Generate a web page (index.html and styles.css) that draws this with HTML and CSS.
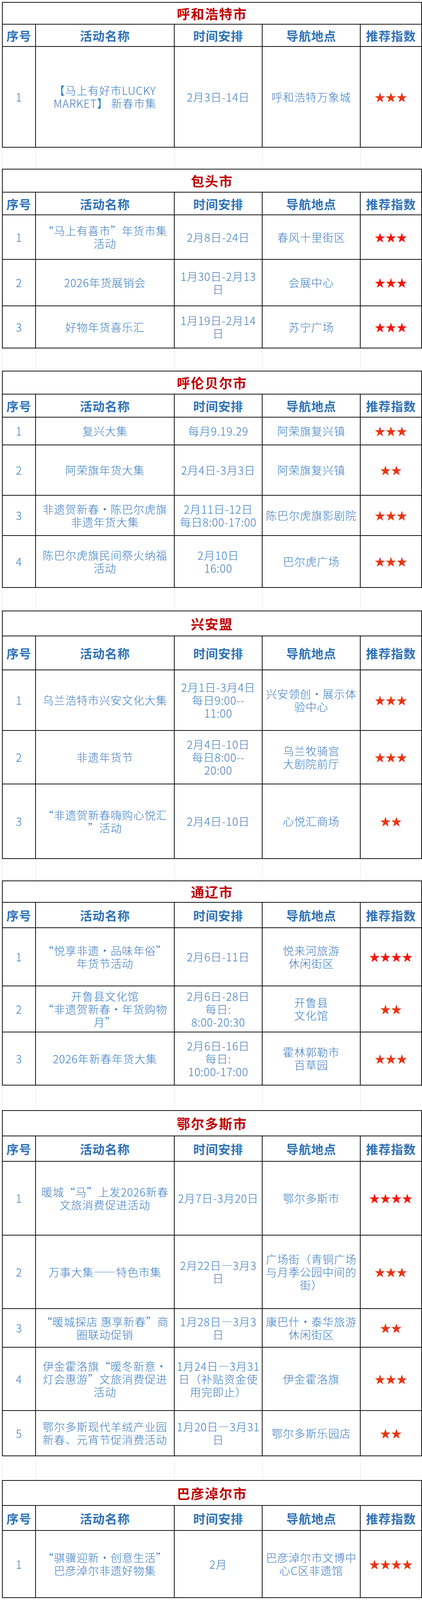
FILE: index.html
```html
<!DOCTYPE html>
<html lang="zh-CN">
<head>
<meta charset="utf-8">
<meta name="viewport" content="width=1080, initial-scale=1">
<title>内蒙古年货市集活动</title>
<link rel="stylesheet" href="styles.css">
</head>
<body>
<main class="sheet">

<section class="city" role="table">
  <div class="row title h56"><div class="cell">呼和浩特市</div></div>
  <div class="row head h57"><div class="cell">序号</div><div class="cell">活动名称</div><div class="cell">时间安排</div><div class="cell">导航地点</div><div class="cell">推荐指数</div></div>
  <div class="row h258"><div class="cell">1</div><div class="cell">【马上有好市LUCKY<br>MARKET】 新春市集</div><div class="cell">2月3日-14日</div><div class="cell">呼和浩特万象城</div><div class="cell stars">★★★</div></div>
</section>

<div class="gap g54"><i></i><i></i><i></i><i></i><i></i></div>

<section class="city" role="table">
  <div class="row title h59"><div class="cell">包头市</div></div>
  <div class="row head h58"><div class="cell">序号</div><div class="cell">活动名称</div><div class="cell">时间安排</div><div class="cell">导航地点</div><div class="cell">推荐指数</div></div>
  <div class="row h114"><div class="cell">1</div><div class="cell">“马上有喜市”年货市集<br>活动</div><div class="cell">2月8日-24日</div><div class="cell">春风十里街区</div><div class="cell stars red">★★★</div></div>
  <div class="row h119"><div class="cell">2</div><div class="cell">2026年货展销会</div><div class="cell">1月30日-2月13<br>日</div><div class="cell">会展中心</div><div class="cell stars red">★★★</div></div>
  <div class="row h108"><div class="cell">3</div><div class="cell">好物年货喜乐汇</div><div class="cell">1月19日-2月14<br>日</div><div class="cell">苏宁广场</div><div class="cell stars red">★★★</div></div>
</section>

<div class="gap g57"><i></i><i></i><i></i><i></i><i></i></div>

<section class="city" role="table">
  <div class="row title h59"><div class="cell">呼伦贝尔市</div></div>
  <div class="row head h59"><div class="cell">序号</div><div class="cell">活动名称</div><div class="cell">时间安排</div><div class="cell">导航地点</div><div class="cell">推荐指数</div></div>
  <div class="row h71"><div class="cell">1</div><div class="cell">复兴大集</div><div class="cell">每月9.19.29</div><div class="cell">阿荣旗复兴镇</div><div class="cell stars">★★★</div></div>
  <div class="row h129"><div class="cell">2</div><div class="cell">阿荣旗年货大集</div><div class="cell">2月4日-3月3日</div><div class="cell">阿荣旗复兴镇</div><div class="cell stars">★★</div></div>
  <div class="row h103"><div class="cell">3</div><div class="cell">非遗贺新春·陈巴尔虎旗<br>非遗年货大集</div><div class="cell">2月11日-12日<br>每日8:00-17:00</div><div class="cell">陈巴尔虎旗影剧院</div><div class="cell stars">★★★</div></div>
  <div class="row h133"><div class="cell">4</div><div class="cell">陈巴尔虎旗民间祭火纳福<br>活动</div><div class="cell">2月10日<br>16:00</div><div class="cell">巴尔虎广场</div><div class="cell stars">★★★</div></div>
</section>

<div class="gap g58"><i></i><i></i><i></i><i></i><i></i></div>

<section class="city" role="table">
  <div class="row title h64"><div class="cell">兴安盟</div></div>
  <div class="row head h87"><div class="cell">序号</div><div class="cell">活动名称</div><div class="cell">时间安排</div><div class="cell">导航地点</div><div class="cell">推荐指数</div></div>
  <div class="row h155"><div class="cell">1</div><div class="cell">乌兰浩特市兴安文化大集</div><div class="cell">2月1日-3月4日<br>每日9:00--<br>11:00</div><div class="cell">兴安领创·展示体<br>验中心</div><div class="cell stars">★★★</div></div>
  <div class="row h137"><div class="cell">2</div><div class="cell">非遗年货节</div><div class="cell">2月4日-10日<br>每日8:00--<br>20:00</div><div class="cell">乌兰牧骑宫<br>大剧院前厅</div><div class="cell stars">★★★</div></div>
  <div class="row h191"><div class="cell">3</div><div class="cell">“非遗贺新春嗨购心悦汇<br>”活动</div><div class="cell">2月4日-10日</div><div class="cell">心悦汇商场</div><div class="cell stars">★★</div></div>
</section>

<div class="gap g55"><i></i><i></i><i></i><i></i><i></i></div>

<section class="city" role="table">
  <div class="row title h55"><div class="cell">通辽市</div></div>
  <div class="row head h65"><div class="cell">序号</div><div class="cell">活动名称</div><div class="cell">时间安排</div><div class="cell">导航地点</div><div class="cell">推荐指数</div></div>
  <div class="row h149"><div class="cell">1</div><div class="cell">“悦享非遗·品味年俗”<br>年货节活动</div><div class="cell">2月6日-11日</div><div class="cell">悦来河旅游<br>休闲街区</div><div class="cell stars red">★★★★</div></div>
  <div class="row h118"><div class="cell">2</div><div class="cell">开鲁县文化馆<br>“非遗贺新春·年货购物<br>月”</div><div class="cell">2月6日-28日<br>每日:<br>8:00-20:30</div><div class="cell">开鲁县<br>文化馆</div><div class="cell stars">★★</div></div>
  <div class="row h136"><div class="cell">3</div><div class="cell">2026年新春年货大集</div><div class="cell">2月6日-16日<br>每日:<br>10:00-17:00</div><div class="cell">霍林郭勒市<br>百草园</div><div class="cell stars">★★★</div></div>
</section>

<div class="gap g63"><i></i><i></i><i></i><i></i><i></i></div>

<section class="city" role="table">
  <div class="row title h65"><div class="cell">鄂尔多斯市</div></div>
  <div class="row head h65"><div class="cell">序号</div><div class="cell">活动名称</div><div class="cell">时间安排</div><div class="cell">导航地点</div><div class="cell">推荐指数</div></div>
  <div class="row h189"><div class="cell">1</div><div class="cell">暖城“马”上发2026新春<br>文旅消费促进活动</div><div class="cell">2月7日-3月20日</div><div class="cell">鄂尔多斯市</div><div class="cell stars red">★★★★</div></div>
  <div class="row h188"><div class="cell">2</div><div class="cell">万事大集——特色市集</div><div class="cell">2月22日—3月3<br>日</div><div class="cell">广场街（青铜广场<br>与月季公园中间的<br>街）</div><div class="cell stars">★★★</div></div>
  <div class="row h99"><div class="cell">3</div><div class="cell">“暖城探店 惠享新春”商<br>圈联动促销</div><div class="cell">1月28日—3月3<br>日</div><div class="cell">康巴什•泰华旅游<br>休闲街区</div><div class="cell stars">★★</div></div>
  <div class="row h162"><div class="cell">4</div><div class="cell">伊金霍洛旗“暖冬新意·<br>灯会惠游”文旅消费促进<br>活动</div><div class="cell">1月24日—3月31<br>日（补贴资金使<br>用完即止）</div><div class="cell">伊金霍洛旗</div><div class="cell stars">★★★</div></div>
  <div class="row h116"><div class="cell">5</div><div class="cell">鄂尔多斯现代羊绒产业园<br>新春、元宵节促消费活动</div><div class="cell">1月20日—3月31<br>日</div><div class="cell">鄂尔多斯乐园店</div><div class="cell stars">★★</div></div>
</section>

<div class="gap g61"><i></i><i></i><i></i><i></i><i></i></div>

<section class="city" role="table">
  <div class="row title h64"><div class="cell">巴彦淖尔市</div></div>
  <div class="row head h64"><div class="cell">序号</div><div class="cell">活动名称</div><div class="cell">时间安排</div><div class="cell">导航地点</div><div class="cell">推荐指数</div></div>
  <div class="row h172"><div class="cell">1</div><div class="cell">“骐骥迎新·创意生活”<br>巴彦淖尔非遗好物集</div><div class="cell">2月</div><div class="cell">巴彦淖尔市文博中<br>心C区非遗馆</div><div class="cell stars">★★★★</div></div>
</section>

</main>
</body>
</html>
```

FILE: styles.css
```css
* { box-sizing: border-box; }

html, body {
  margin: 0;
  padding: 0;
  background: #ffffff;
}

.sheet {
  display: block;
  width: 1080px;
  padding: 5px 0 0 5px;
}

/* one city block = one bordered sheet table */
.city {
  width: 1075px;
  border-top: 2px solid #141414;
  border-left: 2px solid #141414;
}

.row {
  display: grid;
  grid-template-columns: 85px 355px 225px 251px 157px;
}

.row.title {
  grid-template-columns: 1fr;
}

.cell {
  display: flex;
  align-items: center;
  justify-content: center;
  text-align: center;
  border-right: 2px solid #141414;
  border-bottom: 2px solid #141414;
  padding: 0 1px;
  white-space: nowrap;
  font-family: "Noto Sans CJK SC", "Noto Sans", sans-serif;
  font-weight: 300;
  font-size: 28px;
  line-height: 33px;
  letter-spacing: 1px;
  color: #3a7dc3;
}

.row.title .cell {
  font-weight: 700;
  font-size: 34px;
  letter-spacing: 2px;
  color: #c00000;
}

.row.head .cell {
  font-weight: 700;
  font-size: 31px;
  letter-spacing: 1px;
  color: #2f72b8;
}

.cell.stars {
  font-weight: 400;
  font-size: 28px;
  letter-spacing: 0;
  color: #ea3410;
}

.cell.stars.red { color: #f5140a; }

/* row heights (bottom border included) */
.h55 { height: 55px; }
.h56 { height: 56px; }
.h57 { height: 57px; }
.h58 { height: 58px; }
.h59 { height: 59px; }
.h64 { height: 64px; }
.h65 { height: 65px; }
.h71 { height: 71px; }
.h87 { height: 87px; }
.h99 { height: 99px; }
.h103 { height: 103px; }
.h108 { height: 108px; }
.h114 { height: 114px; }
.h116 { height: 116px; }
.h118 { height: 118px; }
.h119 { height: 119px; }
.h129 { height: 129px; }
.h133 { height: 133px; }
.h136 { height: 136px; }
.h137 { height: 137px; }
.h149 { height: 149px; }
.h155 { height: 155px; }
.h162 { height: 162px; }
.h172 { height: 172px; }
.h188 { height: 188px; }
.h189 { height: 189px; }
.h191 { height: 191px; }
.h258 { height: 258px; }

/* spreadsheet gridlines between tables */
.gap {
  display: grid;
  grid-template-columns: 86px 355px 225px 251px 158px;
  width: 1075px;
}
.gap i {
  display: block;
  border-left: 1px solid #e4e4e4;
}
.g54 { height: 54px; }
.g55 { height: 55px; }
.g57 { height: 57px; }
.g58 { height: 58px; }
.g61 { height: 61px; }
.g63 { height: 63px; }
```
